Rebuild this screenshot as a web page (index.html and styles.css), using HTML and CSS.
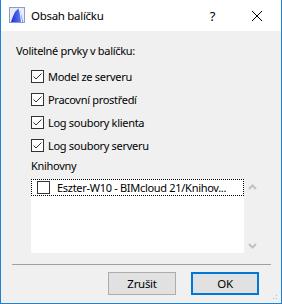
FILE: index.html
```html
<!DOCTYPE html>
<html lang="cs">
<head>
  <meta charset="UTF-8" />
  <title>Obsah balíčku</title>
  <link rel="stylesheet" href="styles.css">
</head>
<body>
  <div class="window">
    <div class="titlebar">
      <svg class="app-icon" width="16" height="16" viewBox="0 0 16 16">
        <defs>
          <linearGradient id="ig" x1="0" y1="0" x2="1" y2="0">
            <stop offset="0" stop-color="#1c2fd6" />
            <stop offset="1" stop-color="#6f8cf2" />
          </linearGradient>
        </defs>
        <rect x="0.5" y="0.5" width="15" height="15" fill="#e8ecf8" stroke="#8f9bc8" />
        <path d="M2 15 C4 9 6 3 10 1.5 C12 5 13 10 14 15 Z" fill="url(#ig)" />
        <path d="M10 1.5 C11.5 6 12 10 12.5 15" stroke="#ffffff" stroke-width="1" fill="none" />
      </svg>
      <span class="title">Obsah balíčku</span>
      <span class="help">?</span>
      <svg class="close" width="12" height="12" viewBox="0 0 12 12">
        <path d="M1 1 L11 11 M11 1 L1 11" stroke="#000" stroke-width="1" />
      </svg>
    </div>

    <div class="content">
      <div class="heading">Volitelné prvky v balíčku:</div>

      <div class="options">
        <label class="option"><span class="box checked"></span>Model ze serveru</label>
        <label class="option"><span class="box checked"></span>Pracovní prostředí</label>
        <label class="option"><span class="box checked"></span>Log soubory klienta</label>
        <label class="option"><span class="box checked"></span>Log soubory serveru</label>
      </div>

      <div class="libs">
        <div class="libs-label">Knihovny</div>
        <div class="listbox">
          <div class="list">
            <div class="item"><span class="box"></span>Eszter-W10 - BIMcloud 21/Knihov...</div>
          </div>
          <div class="scrollbar">
            <svg width="9" height="6" viewBox="0 0 9 6"><path d="M1 5 L4.5 1.5 L8 5" stroke="#c2c2c2" stroke-width="2" fill="none" /></svg>
            <svg width="9" height="6" viewBox="0 0 9 6"><path d="M1 1 L4.5 4.5 L8 1" stroke="#c2c2c2" stroke-width="2" fill="none" /></svg>
          </div>
        </div>
      </div>

      <div class="separator"></div>

      <div class="buttons">
        <button class="btn">Zrušit</button>
        <button class="btn default">OK</button>
      </div>
    </div>
    <div class="grip"></div>
  </div>
</body>
</html>
```

FILE: styles.css
```css
body {
  margin: 0;
  font-family: 'Noto Sans', sans-serif;
  font-size: 11px;
  letter-spacing: -0.3px;
  color: #000;
}
.window {
  position: relative;
  width: 282px;
  height: 304px;
  box-sizing: border-box;
  border: 1px solid #1883d7;
  border-top: none;
  background: #f0f0f0;
  display: flex;
  flex-direction: column;
}
.titlebar {
  height: 31px;
  background: #fff;
  display: flex;
  align-items: center;
  flex-shrink: 0;
  font-size: 11.5px;
}
.app-icon {
  margin-left: 8px;
  margin-top: -1px;
}
.title {
  margin-left: 6px;
  flex: 1;
}
.help {
  font-size: 13px;
  margin-right: 36px;
}
.close {
  margin-right: 18px;
}
.content {
  padding: 12px 10px 0 11px;
  flex: 1;
  display: flex;
  flex-direction: column;
}
.heading {
  padding-left: 4px;
  line-height: 16px;
}
.options {
  display: flex;
  flex-direction: column;
  padding: 6px 0 0 19px;
}
.option {
  display: flex;
  align-items: center;
  height: 23px;
}
.box {
  width: 13px;
  height: 13px;
  box-sizing: border-box;
  border: 1px solid #333;
  background: #fff;
  margin-right: 4px;
  flex-shrink: 0;
}
.box.checked {
  background: #fff url("data:image/svg+xml,%3Csvg xmlns='http://www.w3.org/2000/svg' width='11' height='11'%3E%3Cpath d='M1.5 5.5 L4 8 L9.5 2.5' stroke='%23333' stroke-width='1' fill='none'/%3E%3C/svg%3E") no-repeat center;
}
.libs {
  padding-left: 19px;
  margin-top: 1px;
}
.libs-label {
  line-height: 16px;
}
.listbox {
  display: flex;
  height: 74px;
  margin-top: 5px;
}
.list {
  width: 213px;
  background: #fff;
}
.item {
  display: flex;
  align-items: center;
  height: 17px;
  box-sizing: border-box;
  border: 1px dotted #000;
  padding-left: 5px;
  white-space: nowrap;
  overflow: hidden;
}
.item .box {
  margin-right: 7px;
}
.scrollbar {
  width: 17px;
  display: flex;
  flex-direction: column;
  align-items: center;
  justify-content: space-between;
  padding: 5px 0 4px;
  box-sizing: border-box;
}
.separator {
  height: 1px;
  background: #a0a0a0;
  margin: 11px 0 0 0;
}
.buttons {
  display: flex;
  justify-content: flex-end;
  gap: 15px;
  margin-top: 7px;
  padding-right: 12px;
}
.btn {
  width: 68px;
  height: 23px;
  box-sizing: border-box;
  border: 1px solid #adadad;
  background: #e1e1e1;
  font-family: inherit;
  font-size: 11.5px;
  letter-spacing: inherit;
  color: #000;
  padding: 0;
}
.btn.default {
  border: 2px solid #0078d7;
}
.grip {
  position: absolute;
  right: 2px;
  bottom: 2px;
  width: 10px;
  height: 10px;
  background-image: radial-gradient(#b8b8b8 1px, transparent 1px);
  background-size: 3px 3px;
  clip-path: polygon(100% 0, 100% 100%, 0 100%);
}
```
